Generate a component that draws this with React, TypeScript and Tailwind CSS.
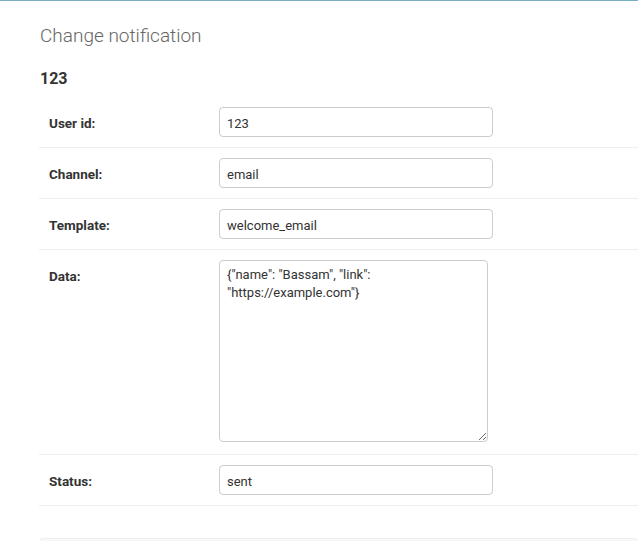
import React from "react";

const font = { fontFamily: 'Roboto, "Open Sans", Arial, sans-serif' };

function Row({ label, children, tall }: { label: string; children: React.ReactNode; tall?: boolean }) {
  return (
    <div className={`flex border-b border-[#eeeeee] pl-[10px] pt-[10px] ${tall ? "pb-[12px]" : "pb-[10px]"}`}>
      <div className="w-[160px] mr-[10px] pt-[6px] text-[13.5px] leading-[20px] font-bold text-[#333333]">{label}</div>
      {children}
    </div>
  );
}

function Input({ value }: { value: string }) {
  return (
    <input
      readOnly
      value={value}
      className="w-[274px] h-[30px] border border-[#cccccc] rounded-[4px] px-[7px] pt-[2px] text-[13px] text-[#333333] bg-white outline-none"
      style={font}
    />
  );
}

export default function App() {
  return (
    <div className="w-[638px] h-[541px] overflow-hidden bg-white border-t border-[#79aec8]" style={font}>
      <div className="pl-[39px] pt-[23px]">
        <h1 className="pl-[1px] text-[19px] leading-[24px] font-light text-[#666666]">Change notification</h1>
        <h2 className="pl-[1px] mt-[21px] mb-[8px] text-[16px] leading-[20px] font-bold text-[#333333]">123</h2>
        <div>
          <Row label="User id:">
            <Input value="123" />
          </Row>
          <Row label="Channel:">
            <Input value="email" />
          </Row>
          <Row label="Template:">
            <Input value="welcome_email" />
          </Row>
          <Row label="Data:" tall>
            <textarea
              readOnly
              value={'{"name": "Bassam", "link": "https://example.com"}'}
              className="block w-[269px] h-[182px] border border-[#cccccc] rounded-[4px] px-[7px] pt-[5px] text-[13px] leading-[18px] text-[#333333] bg-white outline-none"
              style={font}
            />
          </Row>
          <Row label="Status:">
            <Input value="sent" />
          </Row>
        </div>
        <div className="mt-[32px] h-[60px] border border-[#eeeeee] bg-[#f8f8f8] rounded-[4px]" />
      </div>
    </div>
  );
}
